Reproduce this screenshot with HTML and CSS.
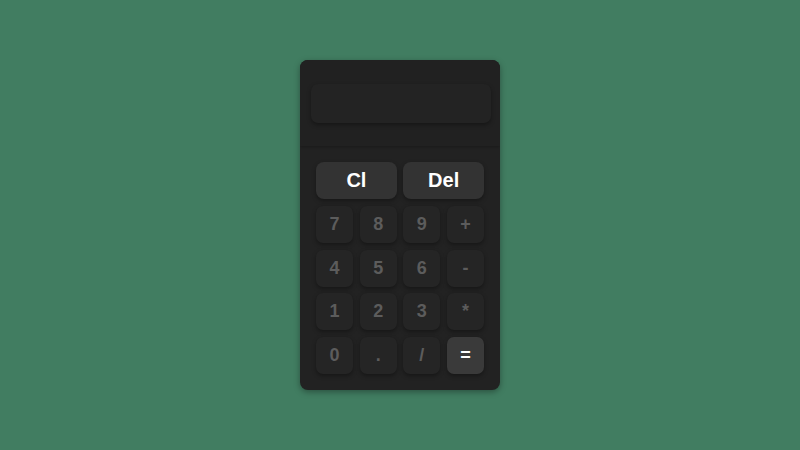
FILE: index.html
```html
<!DOCTYPE html>
<html>
<head>
<meta charset="utf-8">
<link rel="stylesheet" href="styles.css">
</head>
<body>
<div class="calc">
  <div class="top">
    <div class="display"></div>
  </div>
  <div class="keys">
    <button class="key wide">Cl</button>
    <button class="key wide">Del</button>
    <button class="key">7</button>
    <button class="key">8</button>
    <button class="key">9</button>
    <button class="key">+</button>
    <button class="key">4</button>
    <button class="key">5</button>
    <button class="key">6</button>
    <button class="key">-</button>
    <button class="key">1</button>
    <button class="key">2</button>
    <button class="key">3</button>
    <button class="key">*</button>
    <button class="key">0</button>
    <button class="key">.</button>
    <button class="key">/</button>
    <button class="key equal">=</button>
  </div>
</div>
</body>
</html>
```
FILE: styles.css
```css
html, body {
  margin: 0;
  height: 100%;
}
body {
  background: #417d61;
  display: flex;
  align-items: center;
  justify-content: center;
  font-family: "Liberation Sans", Arial, sans-serif;
}
.calc {
  width: 200px;
  height: 330px;
  background: #222222;
  border-radius: 8px;
  box-shadow: 0 2px 6px rgba(0,0,0,0.35);
  display: flex;
  flex-direction: column;
  overflow: hidden;
}
.top {
  height: 87px;
  padding: 24px 9px 0 11px;
  box-sizing: border-box;
  background: #212121;
  box-shadow: 0 1px 3px rgba(0,0,0,0.25);
}
.display {
  height: 39px;
  background: #232323;
  border-radius: 7px;
  box-shadow: 0 2px 4px rgba(0,0,0,0.35);
}
.keys {
  flex: 1;
  padding: 16px 16px 16px 16px;
  display: grid;
  grid-template-columns: repeat(4, 1fr);
  grid-template-rows: 37.3px repeat(4, 37px);
  column-gap: 6.5px;
  row-gap: 6.67px;
  align-content: start;
}
.key {
  border: none;
  margin: 0;
  padding: 0;
  border-radius: 7px;
  background: #252525;
  color: #5c5c5c;
  font-family: "Liberation Sans", Arial, sans-serif;
  font-weight: bold;
  font-size: 18px;
  box-shadow: 0 2px 4px rgba(0,0,0,0.35);
  display: flex;
  align-items: center;
  justify-content: center;
}
.key.wide {
  grid-column: span 2;
  background: #333333;
  color: #ffffff;
  font-size: 20px;
  border-radius: 8px;
}
.key.equal {
  background: #3a3a3a;
  color: #ffffff;
}
```
